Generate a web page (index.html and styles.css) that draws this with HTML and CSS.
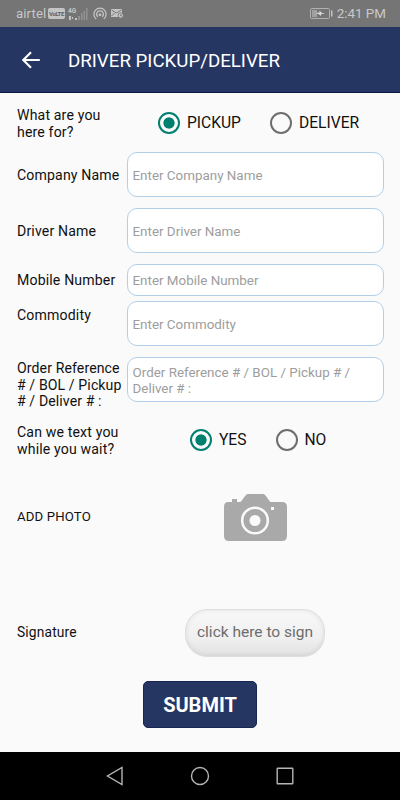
FILE: index.html
```html
<!DOCTYPE html>
<html lang="en">

<head>
    <meta charset="UTF-8">
    <meta name="viewport" content="width=device-width, initial-scale=1.0">
    <title>Driver Pickup/Deliver</title>
    <link rel="stylesheet" href="styles.css">
</head>

<body>
    <!-- Status bar -->
    <div class="status-bar">
        <span class="carrier">airtel</span>
        <span class="volte">VoLTE</span>
        <svg class="signal" width="20" height="14" viewBox="0 0 20 14" fill="#c4c4c4">
            <text class="signal-type" x="0" y="6">4G</text>
            <path d="M1 9h2v4H1zM4 10h1v2H4zM7 11h2v2H7z" />
            <path fill="#929292" d="M10 9h2v4h-2zM13 6h1.500v7H13zM15.500 4H17v9h-1.500zM18 1h1.500v12H18z" />
        </svg>
        <svg class="hotspot" width="14" height="14" viewBox="0 0 14 14" fill="none" stroke="#c4c4c4" stroke-width="1.3">
            <path d="M3.200 12A6.100 6.100 0 1 1 10.800 12" />
            <path d="M4.800 9.800A3.400 3.400 0 1 1 9.200 9.800" />
            <circle cx="7" cy="7.800" r="1.400" fill="#c4c4c4" stroke="none" />
        </svg>
        <svg class="mail" width="13" height="11" viewBox="0 0 13 11">
            <path fill="#c4c4c4" d="M0 1h11v8H0z" />
            <path fill="none" stroke="#757575" d="M.5 2l5 3 5-3M.5 8l3-3" />
            <circle cx="9.700" cy="7.500" r="2.600" fill="#c4c4c4" stroke="#757575" stroke-width=".8" />
            <path fill="none" stroke="#757575" stroke-width=".8" d="M9.500 6.200v1.500H11" />
        </svg>
        <svg class="battery" width="23" height="11" viewBox="0 0 23 11">
            <rect x=".5" y=".5" width="19" height="10" rx="1" fill="none" stroke="#b0b0b0" />
            <path fill="#a0a0a0" d="M2 2h5v7H2z" />
            <path fill="#d8d8d8" d="M5 5l4.500-.5V2.500L12 5l3 .5-4 .8v1.700L8.500 6z" />
            <path fill="#c4c4c4" d="M21 2.500h1.500v6H21z" />
        </svg>
        <span class="clock">2:41 PM</span>
    </div>

    <!-- App bar -->
    <header class="app-bar">
        <svg class="back" width="18" height="18" viewBox="0 0 18 18" fill="none" stroke="#fff" stroke-width="2.2">
            <path d="M17.800 9H1.500M9 1.200L1.300 9L9 16.800" />
        </svg>
        <h1 class="title">DRIVER PICKUP/DELIVER</h1>
    </header>

    <form class="driver-form">
        <div class="row purpose">
            <span class="label">What are you here for?</span>
            <div class="radio-group">
                <label class="radio-item"><input type="radio" name="purpose" value="pickup" checked>PICKUP</label>
                <label class="radio-item"><input type="radio" name="purpose" value="deliver">DELIVER</label>
            </div>
        </div>

        <div class="row">
            <label class="label" for="company">Company Name</label>
            <input class="field" type="text" id="company" placeholder="Enter Company Name">
        </div>
        <div class="row">
            <label class="label" for="driver">Driver Name</label>
            <input class="field" type="text" id="driver" placeholder="Enter Driver Name">
        </div>
        <div class="row mobile">
            <label class="label" for="mobile">Mobile Number</label>
            <input class="field" type="tel" id="mobile" placeholder="Enter Mobile Number">
        </div>
        <div class="row commodity">
            <label class="label" for="commodity">Commodity</label>
            <input class="field" type="text" id="commodity" placeholder="Enter Commodity">
        </div>
        <div class="row reference">
            <label class="label" for="reference">Order Reference # / BOL / Pickup # / Deliver # :</label>
            <textarea class="field" id="reference" placeholder="Order Reference # / BOL / Pickup # / Deliver # :"></textarea>
        </div>

        <div class="row texting">
            <span class="label">Can we text you while you wait?</span>
            <div class="radio-group">
                <label class="radio-item"><input type="radio" name="texting" value="yes" checked>YES</label>
                <label class="radio-item"><input type="radio" name="texting" value="no">NO</label>
            </div>
        </div>

        <div class="row photo">
            <span class="label">ADD PHOTO</span>
            <button class="camera" type="button" aria-label="Add photo">
                <svg width="63" height="47" viewBox="0 0 63 47">
                    <path fill="#a9a9a9" d="M4 8h4V5h5v3h3c2 0 5-8 8-8h15c3 0 6 8 8 8h11q5 0 5 5v29q0 5-5 5H5q-5 0-5-5V13q0-5 4-5z" />
                    <circle cx="31" cy="26.500" r="12.800" fill="none" stroke="#fafafa" stroke-width="2.500" />
                    <circle cx="31" cy="26.500" r="5.500" fill="#fafafa" />
                    <path fill="#fafafa" d="M47 13h3v3h-3z" />
                </svg>
            </button>
        </div>

        <div class="row signature">
            <span class="label">Signature</span>
            <button class="sign-btn" type="button">click here to sign</button>
        </div>

        <button class="submit-btn" type="submit">SUBMIT</button>
    </form>

    <!-- System navigation -->
    <nav class="nav-bar">
        <svg width="18" height="20" viewBox="0 0 18 20"><path d="M16 1.500v17L1.500 10z" /></svg>
        <svg width="20" height="20" viewBox="0 0 20 20"><circle cx="10" cy="10" r="8.500" /></svg>
        <svg width="18" height="18" viewBox="0 0 18 18"><rect x="1.200" y="1.200" width="15.600" height="15.600" rx=".5" /></svg>
    </nav>
</body>

</html>
```

FILE: styles.css
```css
:root {
    --navy: #263663;
    --green: #00806f;
    --field-border: #b3cfe8;
    --background: #fafafa;
}

* {
    margin: 0;
    padding: 0;
    box-sizing: border-box;
    font-family: Roboto, "Liberation Sans", sans-serif;
}

body {
    height: 800px;
    display: flex;
    flex-direction: column;
    background: var(--background);
    color: #111;
    overflow: hidden;
}

/* Status bar */
.status-bar {
    height: 27px;
    display: flex;
    align-items: center;
    padding: 0 14px 0 16px;
    background: #757575;
    color: #c8c8c8;
}

.carrier {
    width: 32px;
    font-size: 13.2px;
    letter-spacing: 0.1px;
}

.volte {
    width: 17px;
    height: 11px;
    border-radius: 2px;
    background: #c4c4c4;
    color: #606060;
    font-size: 6px;
    font-weight: 700;
    line-height: 11px;
    text-align: center;
    letter-spacing: -0.4px;
}

.signal {
    margin-left: 3px;
}

.signal-type {
    font-size: 6.5px;
    font-weight: 700;
}

.hotspot {
    margin-left: 5px;
}

.mail {
    margin-left: 4px;
}

.battery {
    margin-left: auto;
}

.clock {
    margin-left: 4px;
    font-size: 13.4px;
    white-space: nowrap;
}

/* App bar */
.app-bar {
    height: 66px;
    display: flex;
    align-items: center;
    padding-left: 22px;
    background: var(--navy);
    border-bottom: 1px solid #0c1742;
    color: #fff;
}

.title {
    margin-left: 28px;
    padding-top: 2px;
    font-size: 18.7px;
    font-weight: 400;
}

/* Form */
.driver-form {
    flex: 1;
    padding: 13px 16.5px 0 17px;
}

.row {
    display: flex;
    align-items: center;
    margin-bottom: 11px;
}

.label {
    flex: none;
    width: 109.5px;
    font-size: 14.1px;
    letter-spacing: 0.15px;
    line-height: 16.5px;
}

.row > label.label {
    padding-top: 1px;
}

.purpose {
    height: 35px;
}

.purpose .label {
    padding-right: 20px;
}

.radio-group {
    display: flex;
    align-items: center;
    margin: -2px 0 0 31.5px;
    gap: 29px;
}

.radio-item {
    display: flex;
    align-items: center;
    gap: 7px;
    font-size: 15.6px;
}

input[type="radio"] {
    appearance: none;
    width: 22px;
    height: 22px;
    border: 2px solid #6e6e6e;
    border-radius: 50%;
}

input[type="radio"]:checked {
    border-color: var(--green);
    background: radial-gradient(circle, var(--green) 5.2px, transparent 6px);
}

.field {
    flex: 1;
    min-width: 0;
    height: 45px;
    padding: 1px 5px 0;
    border: 1px solid var(--field-border);
    border-radius: 10px;
    background: #fff;
    font-size: 13.4px;
    line-height: 15.5px;
    resize: none;
    outline: none;
}

.field::placeholder {
    color: #9d9d9d;
}

.mobile .field {
    height: 32px;
}

.row.mobile {
    margin-bottom: 5px;
}

.commodity > label.label {
    align-self: flex-start;
    padding-top: 6px;
}

.row.reference {
    height: 53px;
    align-items: flex-start;
    margin-bottom: 13px;
}

.reference > label.label {
    padding-top: 3px;
    letter-spacing: 0.1px;
}

.reference .field {
    padding-top: 7px;
    padding-right: 4px;
    overflow: hidden;
}

.texting {
    height: 35px;
}

.texting .radio-group {
    margin-left: 63.5px;
}

.photo {
    height: 50px;
    margin: 34px 0 67px;
}

.photo .label {
    padding-top: 1px;
    font-size: 13.2px;
}

.camera {
    height: 47px;
    margin-left: 97.5px;
    border: none;
    background: none;
}

.signature {
    height: 48px;
    margin-bottom: 24px;
}

.signature .label {
    padding-bottom: 2px;
    font-size: 13.8px;
}

.sign-btn {
    width: 140px;
    height: 48px;
    margin-left: 58.5px;
    padding-bottom: 3px;
    border: 1px solid #dedede;
    border-radius: 22px;
    background: linear-gradient(#f8f8f8, #f0f0f0 60%, #e2e2e2);
    box-shadow: inset 0 0 5px rgba(0, 0, 0, 0.1);
    color: #6c6c6c;
    font-size: 15.5px;
}

.submit-btn {
    display: block;
    width: 114px;
    height: 47px;
    margin-left: 126px;
    border: 1px solid #172553;
    border-radius: 5px;
    background: var(--navy);
    color: #fff;
    font-size: 20px;
    font-weight: 700;
}

/* System navigation */
.nav-bar {
    height: 48px;
    display: flex;
    align-items: center;
    justify-content: space-between;
    padding: 0 106px;
    background: #000;
    fill: none;
    stroke: #b5b5b5;
    stroke-width: 1.4;
}
```
